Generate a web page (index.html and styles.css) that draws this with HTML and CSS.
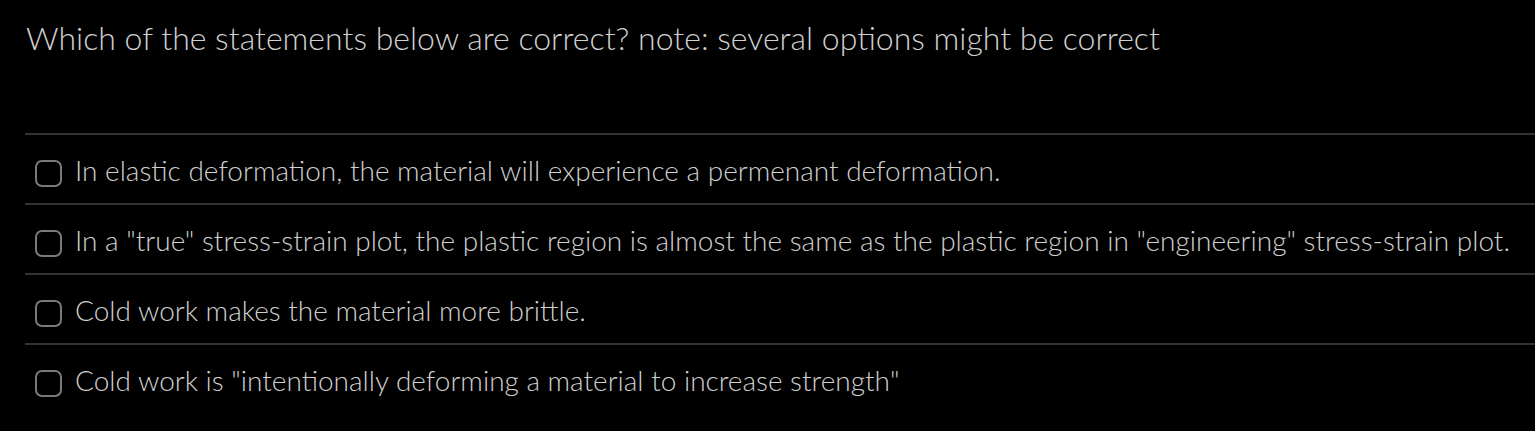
FILE: index.html
```html
<!DOCTYPE html>
<html>
<head>
<meta charset="utf-8">
<link rel="stylesheet" href="styles.css">
</head>
<body>
<div class="quiz">
  <div class="question">Which of the statements below are correct? note: several options might be correct</div>
  <div class="options">
    <label class="option"><span class="box"></span><span class="text">In elastic deformation, the material will experience a permenant deformation.</span></label>
    <label class="option"><span class="box"></span><span class="text">In a "true" stress-strain plot, the plastic region is almost the same as the plastic region in "engineering" stress-strain plot.</span></label>
    <label class="option"><span class="box"></span><span class="text">Cold work makes the material more brittle.</span></label>
    <label class="option"><span class="box"></span><span class="text">Cold work is "intentionally deforming a material to increase strength"</span></label>
  </div>
</div>
</body>
</html>
```
FILE: styles.css
```css
html, body {
  margin: 0;
  padding: 0;
  background: #000;
}
.quiz {
  font-family: Lato, "Liberation Sans", sans-serif;
  font-weight: 300;
  color: #d0d0d0;
  padding-top: 16px;
}
.question {
  font-size: 32px;
  line-height: 44px;
  padding-left: 26px;
  height: 117px;
}
.options {
  margin-left: 25px;
}
.option {
  display: flex;
  align-items: center;
  box-sizing: border-box;
  height: 70px;
  padding-top: 2px;
  border-top: 2px solid #333;
  font-size: 28px;
  padding-left: 10px;
}
.box {
  width: 23px;
  height: 23px;
  border: 2.5px solid #7a7a7a;
  border-radius: 7px;
  flex: none;
  margin-right: 13px;
  margin-top: 6px;
}
```
